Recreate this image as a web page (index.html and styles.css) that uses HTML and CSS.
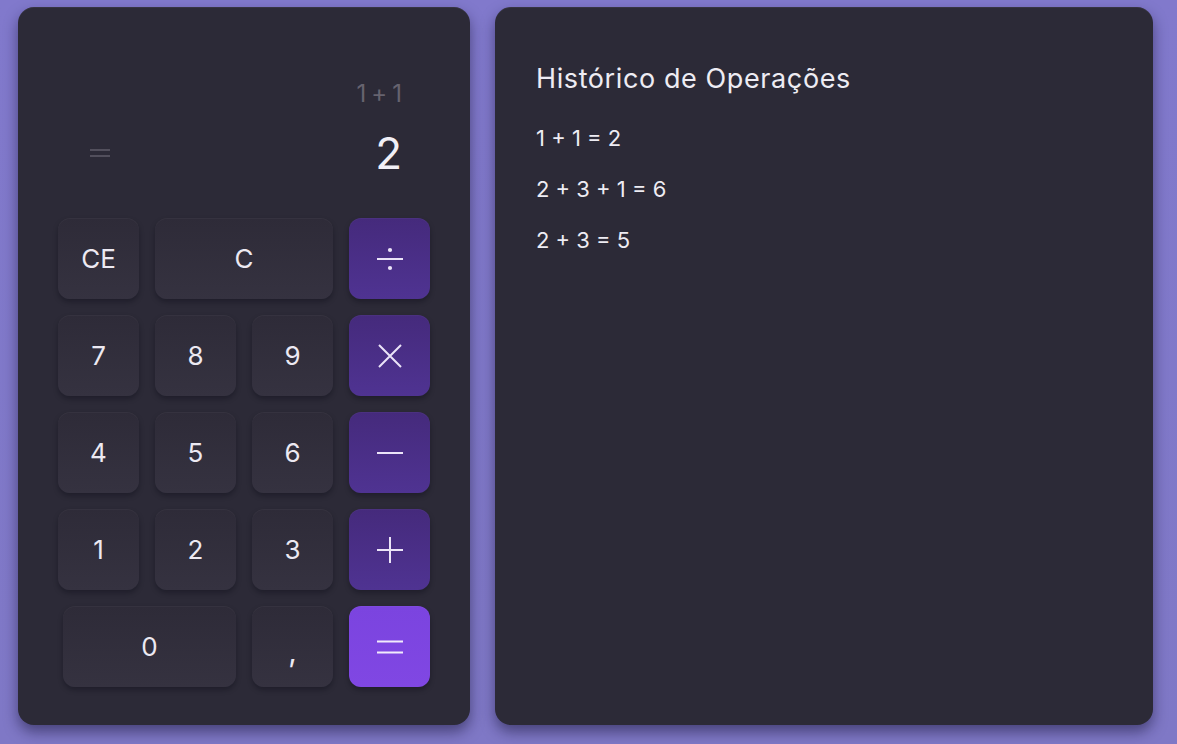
FILE: index.html
```html
<!DOCTYPE html>
<html lang="pt">
<head>
<meta charset="utf-8">
<title>Calculadora</title>
<link rel="stylesheet" href="styles.css">
</head>
<body>
<main class="app">
  <section class="calc">
    <div class="display">
      <div class="expr">1+1</div>
      <div class="result-row">
        <svg class="eq-sign" width="22" height="10" viewBox="0 0 22 10"><path d="M1 2H21M1 8H21" stroke="currentColor" stroke-width="1.6" fill="none"/></svg>
        <span class="result">2</span>
      </div>
    </div>
    <div class="keypad">
      <button class="key">CE</button>
      <button class="key span2">C</button>
      <button class="key op"><svg width="28" height="28" viewBox="0 0 28 28"><path d="M1 14H27" stroke="currentColor" stroke-width="2"/><circle cx="14" cy="5" r="2.1" fill="currentColor"/><circle cx="14" cy="23" r="2.1" fill="currentColor"/></svg></button>
      <button class="key">7</button>
      <button class="key">8</button>
      <button class="key">9</button>
      <button class="key op"><svg width="28" height="28" viewBox="0 0 28 28"><path d="M3 3L25 25M25 3L3 25" stroke="currentColor" stroke-width="2"/></svg></button>
      <button class="key">4</button>
      <button class="key">5</button>
      <button class="key">6</button>
      <button class="key op"><svg width="28" height="28" viewBox="0 0 28 28"><path d="M1 14H27" stroke="currentColor" stroke-width="2"/></svg></button>
      <button class="key">1</button>
      <button class="key">2</button>
      <button class="key">3</button>
      <button class="key op"><svg width="28" height="28" viewBox="0 0 28 28"><path d="M1 14H27M14 1V27" stroke="currentColor" stroke-width="2"/></svg></button>
      <button class="key span2 zero">0</button>
      <button class="key comma">,</button>
      <button class="key equal"><svg width="28" height="28" viewBox="0 0 28 28"><path d="M1 8.5H27M1 19.5H27" stroke="currentColor" stroke-width="2"/></svg></button>
    </div>
  </section>
  <section class="history">
    <h1 class="history-title">Histórico de Operações</h1>
    <ul class="history-list">
      <li>1 + 1 = 2</li>
      <li>2 + 3 + 1 = 6</li>
      <li>2 + 3 = 5</li>
    </ul>
  </section>
</main>
</body>
</html>
```

FILE: styles.css
```css
* { box-sizing: border-box; }
html, body { margin: 0; height: 100%; }
body {
  background: linear-gradient(180deg, #8179cc 0%, #7f78c6 100%);
  font-family: "Inter", "Noto Sans", sans-serif;
  color: #ebe9f1;
  overflow: hidden;
}
.app {
  display: flex;
  gap: 25px;
  padding: 7px 24px 0 18px;
  height: 744px;
}
.calc, .history {
  background: #2c2a37;
  border-radius: 16px;
  height: 718px;
  box-shadow: 0 7px 14px rgba(20, 16, 50, 0.5), inset 0 1px 0 rgba(255,255,255,0.05);
}
.calc {
  width: 452px;
  padding: 0 41px 0 40px;
  display: flex;
  flex-direction: column;
}
.display {
  height: 211px;
  padding-top: 73px;
  padding-right: 27px;
  display: flex;
  flex-direction: column;
}
.expr {
  text-align: right;
  font-size: 24px;
  line-height: 28px;
  color: #66636f;
  letter-spacing: 5px;
  margin-right: -5px;
}
.result-row {
  margin-top: 21px;
  height: 48px;
  display: flex;
  align-items: center;
  justify-content: space-between;
  padding-left: 31px;
}
.eq-sign { color: #5f5c69; }
.result {
  font-size: 44px;
  line-height: 48px;
  color: #f1eff6;
}
.keypad {
  display: grid;
  grid-template-columns: repeat(4, 81px);
  grid-auto-rows: 81px;
  gap: 16px;
}
.key {
  border: 0;
  padding: 0;
  border-radius: 12px;
  background: linear-gradient(180deg, #2e2b38 0%, #353240 100%);
  box-shadow: 0 3px 5px rgba(10, 8, 20, 0.35), inset 0 1px 0 rgba(255,255,255,0.035);
  color: #ece9f2;
  font-family: inherit;
  font-size: 26px;
  display: flex;
  align-items: center;
  justify-content: center;
}
.span2 { grid-column: span 2; }
.zero { margin-left: 5px; }
.comma { font-size: 30px; padding-top: 8px; }
.op {
  background: linear-gradient(180deg, #452a7c 0%, #4f3392 100%);
  color: #ebe4f8;
}
.equal {
  background: linear-gradient(180deg, #7b44df 0%, #8047e3 100%);
  color: #f1ebfc;
}
.history {
  flex: 1;
  padding: 56px 41px 0 41px;
}
.history-title {
  margin: 0;
  font-weight: 400;
  font-size: 27px;
  line-height: 32px;
  letter-spacing: 0.6px;
  color: #eeecf3;
}
.history-list {
  list-style: none;
  margin: 18px 0 0;
  padding: 0;
}
.history-list li {
  font-size: 22px;
  line-height: 51px;
  color: #eeecf3;
}
```
